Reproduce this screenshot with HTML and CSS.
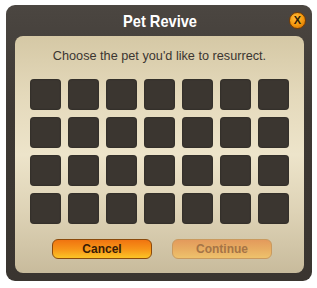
FILE: index.html
```html
<!DOCTYPE html>
<html lang="en">
<head>
    <meta charset="UTF-8">
    <title>Pet Revive</title>
    <link rel="stylesheet" href="styles.css">
</head>
<body>
    <div class="dialog">
        <div class="dialog-head">
            <h1 class="dialog-title">Pet Revive</h1>
            <button class="close-btn">X</button>
        </div>
        <div class="dialog-body">
            <p class="prompt">Choose the pet you'd like to resurrect.</p>
            <div class="slots">
                <div class="slot"></div><div class="slot"></div><div class="slot"></div><div class="slot"></div><div class="slot"></div><div class="slot"></div><div class="slot"></div>
                <div class="slot"></div><div class="slot"></div><div class="slot"></div><div class="slot"></div><div class="slot"></div><div class="slot"></div><div class="slot"></div>
                <div class="slot"></div><div class="slot"></div><div class="slot"></div><div class="slot"></div><div class="slot"></div><div class="slot"></div><div class="slot"></div>
                <div class="slot"></div><div class="slot"></div><div class="slot"></div><div class="slot"></div><div class="slot"></div><div class="slot"></div><div class="slot"></div>
            </div>
            <div class="actions">
                <button class="btn btn-cancel">Cancel</button>
                <button class="btn btn-continue" disabled>Continue</button>
            </div>
        </div>
    </div>
</body>
</html>
```

FILE: styles.css
```css
body {
    margin: 0;
    background: #ffffff;
    font-family: "Liberation Sans", Arial, sans-serif;
}

.dialog {
    margin: 5px 0 0 6px;
    width: 306px;
    height: 276px;
    box-sizing: border-box;
    padding: 0 8px 8px 9px;
    background: linear-gradient(to bottom, #4b4641 0%, #3d3833 40%, #3a3530 100%);
    border-radius: 9px;
    display: flex;
    flex-direction: column;
}

.dialog-head {
    height: 31px;
    display: flex;
    align-items: center;
    justify-content: center;
    position: relative;
}

.dialog-title {
    margin: 0;
    font-family: "Liberation Sans", sans-serif;
    font-weight: bold;
    font-size: 17px;
    color: #ffffff;
    padding-top: 2px;
    transform: scaleX(0.86);
}

.close-btn {
    position: absolute;
    right: -2px;
    top: 7px;
    width: 17px;
    height: 17px;
    padding: 0;
    border: 1px solid #7a3d00;
    border-radius: 50%;
    background: radial-gradient(circle at 40% 35%, #ffc040 0%, #f59a10 50%, #d06a00 100%);
    color: #2e1a06;
    font-family: "Liberation Sans", sans-serif;
    font-weight: bold;
    font-size: 11px;
    line-height: 15px;
    text-align: center;
}

.dialog-body {
    flex: 1;
    border-radius: 8px;
    background: linear-gradient(to bottom, #d5c8a5 0%, #e4d9bb 25%, #ede4ca 50%, #ddd2b5 75%, #c8bb9c 100%);
    display: flex;
    flex-direction: column;
    align-items: center;
}

.prompt {
    margin: 12px 0 0 0;
    height: 16px;
    font-size: 12.7px;
    line-height: 16px;
    color: #3b3631;
}

.slots {
    margin-top: 15px;
    display: grid;
    grid-template-columns: repeat(7, 31px);
    grid-auto-rows: 31px;
    gap: 7px;
}

.slot {
    background: #3b3630;
    border-radius: 4px;
    box-shadow: inset 0 0 2px rgba(0, 0, 0, 0.4);
}

.actions {
    margin-top: 15px;
    padding-left: 5px;
    display: flex;
    gap: 20px;
}

.btn {
    width: 100px;
    height: 20px;
    padding: 0;
    border-radius: 6px;
    font-family: "Liberation Sans", sans-serif;
    font-weight: bold;
    font-size: 12px;
    text-align: center;
}

.btn-cancel {
    border: 1px solid #8a4a0c;
    background: linear-gradient(to bottom, #f07410 0%, #f79418 50%, #fbc426 100%);
    color: #3a1c06;
}

.btn-continue {
    border: 1px solid #c99a5e;
    background: linear-gradient(to bottom, #e39a5c 0%, #e8ad62 50%, #eec26c 100%);
    color: #a57446;
}
```
